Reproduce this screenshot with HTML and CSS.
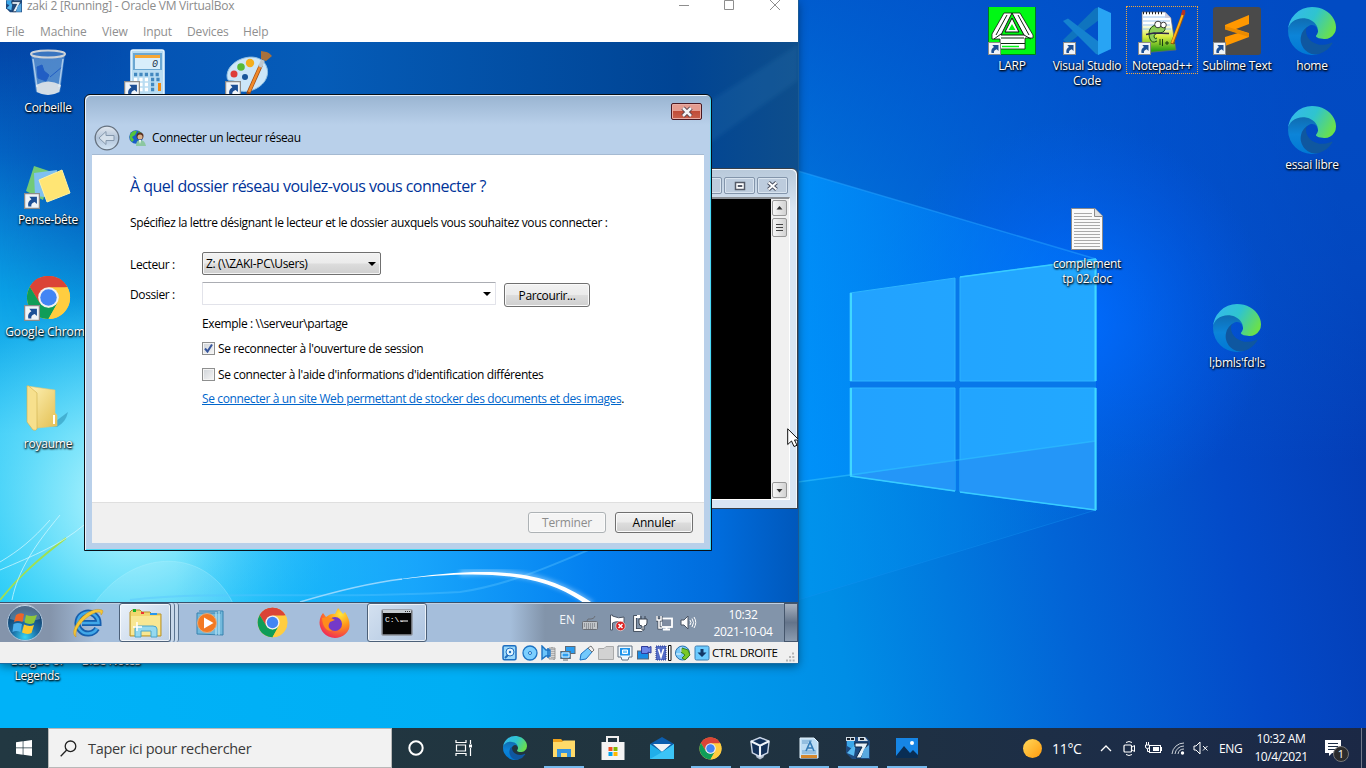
FILE: index.html
```html
<!DOCTYPE html>
<html lang="fr">
<head>
<meta charset="utf-8">
<title>Bureau</title>
<link rel="stylesheet" href="styles.css">
</head>
<body>
<svg class="defs" width="0" height="0">
  <defs>
    <linearGradient id="eg1" x1="0" y1="0.2" x2="1" y2="0.6"><stop offset="0" stop-color="#35b8ee"/><stop offset=".5" stop-color="#2fc4cf"/><stop offset="1" stop-color="#6be04a"/></linearGradient>
    <linearGradient id="eg2" x1="0" y1="0" x2="0" y2="1"><stop offset="0" stop-color="#1069ac"/><stop offset=".5" stop-color="#0c84d8"/><stop offset="1" stop-color="#0078d4"/></linearGradient>
    <linearGradient id="fold" x1="0" y1="0" x2="1" y2="1"><stop offset="0" stop-color="#fff3b8"/><stop offset="1" stop-color="#e3bf52"/></linearGradient>
    <radialGradient id="ff" cx=".7" cy=".2" r=".9"><stop offset="0" stop-color="#ffe83c"/><stop offset=".45" stop-color="#ff9518"/><stop offset="1" stop-color="#f0205c"/></radialGradient>
    <radialGradient id="orb" cx=".5" cy=".9" r=".8"><stop offset="0" stop-color="#35d4f4"/><stop offset=".45" stop-color="#1b6ea5"/><stop offset="1" stop-color="#123a63"/></radialGradient>
    <symbol id="edge" viewBox="0 0 256 256"><g transform="translate(-4.63 -4.92)">
      <path fill="#0f57a0" d="M235.68 195.46a93.73 93.73 0 01-10.54 4.71 101.87 101.87 0 01-35.9 6.46c-47.32 0-88.54-32.55-88.54-74.32A31.48 31.48 0 01117.13 105c-42.8 1.8-53.8 46.4-53.8 72.53 0 73.88 68.09 81.37 82.76 81.37 7.91 0 19.84-2.3 27-4.56l1.31-.44a128.34 128.34 0 0066.6-52.8 4 4 0 00-5.32-5.64z"/>
      <path fill="url(#eg2)" d="M110.34 246.34A79.2 79.2 0 0187.6 225a80.72 80.72 0 0129.53-120c3.12-1.47 8.45-4.13 15.54-4a32.35 32.35 0 0125.69 13 31.88 31.88 0 016.36 18.66c0-.21 24.46-79.6-80-79.6-43.9 0-80 41.66-80 78.21a130.15 130.15 0 0012.11 56 128 128 0 00156.38 67.11 75.55 75.55 0 01-62.78-8z"/>
      <path fill="url(#eg1)" d="M156.94 153.78c-.81 1.05-3.3 2.5-3.3 5.66 0 2.61 1.7 5.12 4.72 7.23 14.38 10 41.49 8.68 41.56 8.68a59.56 59.56 0 0030.27-8.35 61.38 61.38 0 0030.43-52.88c.26-22.41-8-37.31-11.34-43.91C228.09 28.76 182.35 4.92 132.61 4.92a128 128 0 00-128 126.2c.48-36.54 36.8-66.05 80-66.05 3.5 0 23.46.34 42 10.07 16.34 8.58 24.9 18.94 30.85 29.21 6.18 10.67 7.28 24.15 7.28 29.52s-2.74 13.33-7.8 19.91z"/></g>
    </symbol>
    <symbol id="chrome" viewBox="0 0 48 48">
      <circle cx="24" cy="24" r="23" fill="#ffcd40"/>
      <path fill="#db4437" d="M24 24 4.1 12.5A23 23 0 0 1 43.9 12.5z"/><path fill="#db4437" d="M24 13H44.2A23 23 0 0 0 4.1 12.5L14.5 30z"/>
      <path fill="#0f9d58" d="M4.1 12.5A23 23 0 0 0 24 47L33.5 30 24 35 14.5 29.5z"/>
      <path fill="#ffcd40" d="M24 13H44.2A23 23 0 0 1 24 47L33.6 29.5z"/>
      <circle cx="24" cy="24" r="11" fill="#f1f1f1"/><circle cx="24" cy="24" r="8.8" fill="#4285f4"/>
    </symbol>
    <symbol id="short" viewBox="0 0 13 13"><rect x=".5" y=".5" width="12" height="12" fill="#f0f4f8" stroke="#8a8a8a"/><path d="M3.500 11C2.800 8 4 6 6 5L4.300 3H10.500V9L8.700 7.300C6.500 8 5.600 9.300 6 11z" fill="#1c4f96"/></symbol>
    <symbol id="vmico" viewBox="0 0 24 24"><path d="M0 1H20L24 5V23H6L0 17z" fill="#1d4a80"/><path d="M1 5H8V14L1 10z" fill="#3aa6e8"/><path d="M1 17 10 7 8 20z" fill="#57b8f0"/><path d="M9 7H22L15 22H10L16 11H9z" fill="#e8f1f8" stroke="#0d2747"/><path d="M18 13 23 9V22H15z" fill="#5aa9e0"/><path d="M0 1H9V5H0zM12 1H19L22 5H12z" fill="#d4dde5"/><path d="M1 3H4M5 3H8M14 3H18" stroke="#17202c" stroke-width="2"/></symbol>
    <filter id="b3"><feGaussianBlur stdDeviation="2"/></filter>
  </defs>
</svg>

<main class="desktop">
  <svg class="wallpaper" viewBox="0 0 1366 768" preserveAspectRatio="none">
    <defs>
      <linearGradient id="base" x1="0" y1=".55" x2="1" y2=".45"><stop offset="0" stop-color="#00b2f8"/><stop offset=".3" stop-color="#00aef4"/><stop offset=".58" stop-color="#008ee6"/><stop offset=".75" stop-color="#0264d6"/><stop offset=".88" stop-color="#034ac8"/><stop offset="1" stop-color="#043cb4"/></linearGradient>
      <linearGradient id="topd" x1="0" y1="0" x2="0" y2="1"><stop offset="0" stop-color="#0050c8" stop-opacity=".75"/><stop offset=".28" stop-color="#0058d0" stop-opacity=".45"/><stop offset=".6" stop-color="#0068e0" stop-opacity="0"/></linearGradient>
      <radialGradient id="glow" gradientUnits="userSpaceOnUse" cx="1070" cy="320" r="200"><stop offset="0" stop-color="#006cff"/><stop offset=".35" stop-color="#006aff" stop-opacity=".6"/><stop offset="1" stop-color="#005ef0" stop-opacity="0"/></radialGradient>
      <linearGradient id="beam" gradientUnits="userSpaceOnUse" x1="798" y1="0" x2="1096" y2="0"><stop offset="0" stop-color="#0092fc" stop-opacity=".85"/><stop offset="1" stop-color="#0080ff" stop-opacity=".25"/></linearGradient>
      <linearGradient id="beam2" gradientUnits="userSpaceOnUse" x1="798" y1="0" x2="1096" y2="0"><stop offset="0" stop-color="#0094ee" stop-opacity=".8"/><stop offset="1" stop-color="#0078e4" stop-opacity=".2"/></linearGradient>
      <linearGradient id="pane" gradientUnits="userSpaceOnUse" x1="850" y1="0" x2="1096" y2="0"><stop offset="0" stop-color="#22a2ff"/><stop offset="1" stop-color="#22a8ff"/></linearGradient>
    </defs>
    <rect width="1366" height="768" fill="url(#base)"/>
    <rect width="1366" height="768" fill="url(#topd)"/>
    <rect x="798" width="568" height="728" fill="url(#glow)"/>
    <path d="M798 171 1096 259V441L798 482z" fill="url(#beam)"/>
    <path d="M798 482 1096 441V510L798 600z" fill="url(#beam2)"/>
    <path d="M798 171 1096 259" stroke="#25a4ff" stroke-opacity=".5" stroke-width="1.500"/>
    <path d="M798 600 1096 510" stroke="#1592f0" stroke-opacity=".4"/>
    <path d="M850 293 1096 259V510L850 476z" fill="#0878ea"/>
    <path d="M850 293 955 278V381H850zM960 277 1096 259V381H960zM850 388H955V491L850 476zM960 388H1096V510L960 492z" fill="url(#pane)" stroke="#2cb4ff"/>
    <path d="M850 476 955 460V491zM960 460 1096 441V510L960 492z" fill="#2496f8"/>
    <path d="M798 482 850 475 1096 441" stroke="#2ec0ff" stroke-opacity=".6" stroke-width="1.500" fill="none"/>
    <path d="M851 293V381M851 388V476M1095.500 259V381M1095.500 388V510" stroke="#40d8ff" stroke-width="2"/>
    <path d="M850 476 955 491M960 492 1096 510M960 277 1096 259" stroke="#38ccff" stroke-width="1.500"/>
  </svg>

  <div class="shortcut s-league"><span class="cap">League of<br>Legends</span></div>
  <div class="shortcut s-blue"><span class="cap">Blue Notes</span></div>

  <div class="shortcut s-larp">
    <svg width="48" height="48" viewBox="0 0 48 48"><rect width="48" height="48" fill="#00f814"/><path d="M.5 0V47.500H47.500V0" fill="none" stroke="#007a20"/><path d="M16 6H32L45 28V31H37V42H12V32H4V27z" fill="#fff" stroke="#111" stroke-width=".8"/><path d="M24 6 13 28H36z" fill="#00f814" stroke="#111"/><path d="M24 11 17 25H31z" fill="#fff" stroke="#111"/><path d="M24 17 20.500 23H27.500z" fill="#00f814"/><path d="M13 31H36M13 36.500H37M13 27 6 32M36 28l7 4M19 8 8 28M30 8 41 28" stroke="#0b2a0e" fill="none"/><path d="M14 39.500H31" stroke="#00f814" stroke-width="1.500"/><use href="#short" y="35" width="13" height="13"/></svg>
    <span class="cap">LARP</span></div>
  <div class="shortcut s-vsc">
    <svg width="48" height="48" viewBox="0 0 48 48"><path d="M36 0V13L5 36.500 0 33 32 1.500z" fill="#0f74be"/><path d="M0 14 5 11.500 36 35V48L33 47z" fill="#1582cf"/><path d="M35 0 48 6V42L35 48z" fill="#28a4f4"/><use href="#short" y="35" width="13" height="13"/></svg>
    <span class="cap">Visual Studio Code</span></div>
  <div class="shortcut s-npp">
    <svg width="48" height="48" viewBox="0 0 48 48"><defs><linearGradient id="np" x1="0" y1="0" x2="0" y2="1"><stop offset=".3" stop-color="#fff"/><stop offset=".6" stop-color="#d8ec40"/><stop offset=".95" stop-color="#289c14"/></linearGradient></defs><path d="M4 5H27L33 11 38 43 4 46z" fill="url(#np)" stroke="#667" stroke-width=".7"/><path d="M5 10H28M5 14H32M5 18H32M5 22H33" stroke="#9cc4ee"/><path d="M5 6H26" stroke="#222" stroke-width="2.500" stroke-dasharray="1 2"/><path d="M27 5V11H33z" fill="#ccd"/><path d="M19 34Q14 37 12 32C9 24 13 18 19 18L27 20Q28 25 22 26 16 26 16 30 17 33 19 31" fill="#8fce58" stroke="#174a13" stroke-width="1"/><circle cx="20" cy="17.500" r="3.300" fill="#fff" stroke="#111" stroke-width=".8"/><circle cx="25.500" cy="18" r="2.800" fill="#fff" stroke="#111" stroke-width=".8"/><path d="M8 27.500 16 26 31 26.500" stroke="#30264a" stroke-width="1.300" fill="none"/><path d="M22 32V38M24.500 32V39M27 36H31M33 36H37M29 34V38" stroke="#173b13" fill="none"/><path d="M34 37 46 5" stroke="#9c560d" stroke-width="3.500"/><path d="M34 36 45 7" stroke="#ffb51c" stroke-width="2"/><path d="m44.500 8 1.500-5" stroke="#b83024" stroke-width="3"/><use href="#short" y="35" width="13" height="13"/></svg>
    <span class="cap">Notepad++</span></div>
  <div class="shortcut s-sub">
    <svg width="48" height="48" viewBox="0 0 48 48"><rect width="48" height="48" rx="3" fill="#4a4a4a"/><path d="M12 18 36 8V17L23 22 36 26V30L12 39V30L25 26 12 22z" fill="#ff9800"/><path d="M12 19 36 26.500V30L12 22.500z" fill="#e98a00"/><use href="#short" y="35" width="13" height="13"/></svg>
    <span class="cap">Sublime Text</span></div>
  <div class="shortcut s-home"><svg width="48" height="48"><use href="#edge"/></svg><span class="cap">home</span></div>
  <div class="shortcut s-essai"><svg width="48" height="48"><use href="#edge"/></svg><span class="cap">essai libre</span></div>
  <div class="shortcut s-doc">
    <svg width="48" height="48" viewBox="0 0 48 48"><path d="M8.500 3.500H32L39.500 11V44.500H8.500z" fill="#fafafa" stroke="#8b8b8b"/><path d="M31.500 3.500V11.500H39.500" fill="#e2e2e2" stroke="#8b8b8b"/><path d="M11 8.500H29M11 11.500H29M11 14.500H37M11 17.500H37M11 20.500H37M11 23.500H37M11 26.500H37M11 29.500H37M11 32.500H37M11 35.500H37M11 38.500H37M11 41.500H37" stroke="#aaa"/></svg>
    <span class="cap">complement tp 02.doc</span></div>
  <div class="shortcut s-bmls"><svg width="48" height="48"><use href="#edge"/></svg><span class="cap">l;bmls'fd'ls</span></div>

  <section class="vm">
    <header class="vm-title">
      <svg width="16" height="16"><use href="#vmico"/></svg>
      <span class="vm-name">zaki 2 [Running] - Oracle VM VirtualBox</span>
      <svg class="vm-controls" width="110" height="14" viewBox="0 0 110 14"><path d="M4 5.500H14M49.500 .500H58.500V9.500H49.500zM95 0 105 10M105 0 95 10" fill="none" stroke="#8e8e8e"/></svg>
    </header>
    <nav class="vm-menu"><span class="m1">File</span><span class="m2">Machine</span><span class="m3">View</span><span class="m4">Input</span><span class="m5">Devices</span><span>Help</span></nav>

    <div class="guest">
      <svg class="guest-wall" viewBox="0 42 798 600" preserveAspectRatio="none">
        <defs>
          <linearGradient id="g7" gradientUnits="userSpaceOnUse" x1="0" y1="42" x2="0" y2="602"><stop offset="0" stop-color="#0346a8"/><stop offset=".2" stop-color="#0464c4"/><stop offset=".45" stop-color="#0aa0e6"/><stop offset=".7" stop-color="#34c8f6"/><stop offset="1" stop-color="#14c6f6"/></linearGradient>
          <linearGradient id="g7r" gradientUnits="userSpaceOnUse" x1="0" y1="0" x2="798" y2="0"><stop offset=".22" stop-color="#1ca4ff" stop-opacity="0"/><stop offset=".52" stop-color="#18a2fc" stop-opacity=".9"/><stop offset=".74" stop-color="#0480f0"/><stop offset=".9" stop-color="#006cdc"/><stop offset="1" stop-color="#0058bc"/></linearGradient>
          <linearGradient id="g7t" gradientUnits="userSpaceOnUse" x1="0" y1="0" x2="798" y2="0"><stop offset="0" stop-color="#0346a8" stop-opacity="0"/><stop offset=".2" stop-color="#0454b4"/><stop offset=".4" stop-color="#055cb8"/><stop offset=".85" stop-color="#004494"/><stop offset="1" stop-color="#0e4e8c"/></linearGradient>
          <linearGradient id="fade" x1="0" y1="0" x2="0" y2="1"><stop offset=".45" stop-color="#fff"/><stop offset="1" stop-color="#000"/></linearGradient>
          <mask id="mk"><rect y="42" width="798" height="300" fill="url(#fade)"/></mask>
          <radialGradient id="lt" gradientUnits="userSpaceOnUse" cx="130" cy="500" r="210"><stop offset="0" stop-color="#c8fbff"/><stop offset=".4" stop-color="#8ceafc" stop-opacity=".75"/><stop offset="1" stop-color="#50d8fc" stop-opacity="0"/></radialGradient>
        </defs>
        <rect y="42" width="798" height="600" fill="url(#g7)"/>
        <rect y="42" width="798" height="600" fill="url(#lt)"/>
        <rect y="42" width="798" height="600" fill="url(#g7r)"/>
        <rect y="42" width="798" height="300" fill="url(#g7t)" mask="url(#mk)"/>
        <path d="M680 120 798 45V80L700 150z" fill="#4a9aca" fill-opacity=".12" filter="url(#b3)"/>
        <path d="M90 610C130 545 210 545 236 610z" fill="#fff" fill-opacity=".12" stroke="#b8f4ff" stroke-opacity=".3"/>
        <path d="M0 600C20 575 40 558 66 538" stroke="#a0e050" stroke-width="2" fill="none"/>
        <path d="M0 570C35 555 60 545 84 525M0 562C20 550 32 540 50 520M12 600C18 570 35 545 60 515" stroke="#d8faff" stroke-opacity=".7" fill="none"/>
        <path d="M130 600C220 590 320 600 460 592 510 585 560 562 600 545" stroke="#58c4ff" stroke-opacity=".4" stroke-width="2" fill="none"/>
        <path d="M300 602C340 590 370 583 402 579" stroke="#b0e0ff" stroke-opacity=".8" stroke-width="1.500" fill="none"/>
        <path d="M460 573C520 569 556 580 592 604" stroke="#bfe4ff" stroke-width="6" stroke-opacity=".5" fill="none" filter="url(#b3)"/>
        <path d="M395 580C500 564 548 572 594 604H585C550 578 500 567 395 580z" fill="#fff"/>
      </svg>

      <div class="gicon g-bin"><svg width="48" height="48" viewBox="0 0 48 48"><path d="M7 4 12 43Q24 49 36 43L41 4z" fill="#bfe0f8" fill-opacity=".4"/><path d="M12 36 13 43Q24 49 35 43L37 36Q24 29 12 36z" fill="#e2e5e8" fill-opacity=".9"/><path d="M13 18 18 16 20 22 25 26 22 32 14 29zM26 28 38 18" fill="#215ec4" stroke="#215ec4"/><ellipse cx="24" cy="5" rx="17" ry="3.500" fill="#3a75c0" stroke="#cdd2d7" stroke-width="2"/><path d="M9 10 13 38M39 10 35 38" stroke="#e8f6ff" stroke-opacity=".6" stroke-width="1.500"/></svg><span class="gcap">Corbeille</span></div>
      <div class="gicon g-calc"><svg width="48" height="48" viewBox="0 0 48 48"><rect x="8" y="1" width="33" height="46" rx="2" fill="#b9dcf2" stroke="#e8f6ff" stroke-width="1.500"/><path d="M10 4H39V21H10z" fill="#6ba7d2"/><path d="M12 6H37V9H12z" fill="#f7a735"/><path d="M12 9H37V20H12z" fill="#d9eefb"/><path d="M11 25.500H38M28 30.500H38M28 35.500H33M28 40.500H33" stroke="#4288bf" stroke-width="3.500" stroke-dasharray="3.200 2.200"/><path d="M11 30.500H25M11 35.500H25M11 40.500H25" stroke="#fff" stroke-width="3.500" stroke-dasharray="3.200 2.200"/><path d="M35 34H38V42H35z" fill="#f28b12"/><text x="29" y="18" class="calc-digit">0</text><use href="#short" x="1" y="32" width="16" height="16"/></svg></div>
      <div class="gicon g-paint"><svg width="48" height="48" viewBox="0 0 48 48"><path d="M3 26C5 8 38 0 43 19 47 33 30 45 16 42 6 40 14 33 10 32 5 31 3 33 3 26z" fill="#cce6f8" stroke="#8dbee2"/><circle cx="10" cy="25" r="3.500" fill="#de3d39"/><circle cx="17" cy="18" r="3.800" fill="#57b936"/><circle cx="26" cy="14" r="4.200" fill="#f3ad1d"/><circle cx="21" cy="28" r="3" fill="#19569a"/><path d="M24 45 37 16" stroke="#9b4b14" stroke-width="4"/><path d="M25 43 36 18" stroke="#f18a2a" stroke-width="2.600"/><path d="m36 18 3-7" stroke="#bec8d0" stroke-width="4"/><path d="M37 2C41 3 44 2 48 7L42 12 37 10z" fill="#a9713b"/><use href="#short" x="1" y="32" width="16" height="16"/></svg></div>
      <div class="gicon g-note"><svg width="48" height="48" viewBox="0 0 48 48"><path d="M10 2 28 8 19 36 2 27z" fill="#72ca76"/><path d="M10 9 33 6 31 34 11 32z" fill="#7fc0f0"/><path d="M15 16 38 6 46 29 23 38z" fill="#ffe574" stroke="#fff2a2"/><use href="#short" y="29" width="16" height="16"/></svg><span class="gcap">Pense-bête</span></div>
      <div class="gicon g-chrome"><svg width="48" height="48" viewBox="0 0 48 48"><use href="#chrome" x="2" y="0" width="45" height="45"/><use href="#short" y="30" width="16" height="16"/></svg><span class="gcap">Google Chrom</span></div>
      <div class="gicon g-folder"><svg width="48" height="48" viewBox="0 0 48 48"><path d="M24 42 44 27Q42 37 33 42z" fill="#17759c" fill-opacity=".4"/><path d="M3 1 31 5V28L33 30V41L13 43z" fill="url(#fold)" stroke="#e2c873" stroke-width=".6"/><path d="M3 1Q4 0 6 2L13 8V44Q12 46 9 45L3 37z" fill="#f7e08d" stroke="#cfae4c" stroke-width=".6"/><path d="M30 30V39" stroke="#fff" stroke-width="2"/></svg><span class="gcap">royaume</span></div>

      <section class="console">
        <div class="con-buttons"><i></i><i><svg width="12" height="10"><path d="M1.500 1.500H10.500V8.500H1.500z" fill="#fff" stroke="#555b68" stroke-width="1.500"/><path d="M4 4.500H8V5.500H4z" fill="#fff" stroke="#555b68"/></svg></i><i><svg width="13" height="10"><path d="M2.500 1.500 10.500 8.500M10.500 1.500 2.500 8.500" stroke="#4a5060" stroke-width="4"/><path d="M2.500 1.500 10.500 8.500M10.500 1.500 2.500 8.500" stroke="#fff" stroke-width="2"/></svg></i></div>
        <div class="con-body"><div class="con-scroll">
          <b class="sb"><svg width="15" height="15"><path d="M4.500 8.500 7.500 5 10.500 8.500z" fill="#333"/></svg></b>
          <b class="sb thumb"><svg width="15" height="18"><path d="M4 5.500H11M4 8.500H11M4 11.500H11" stroke="#444"/></svg></b>
          <b class="sb down"><svg width="15" height="15"><path d="M4.500 6 7.500 9.500 10.500 6z" fill="#333"/></svg></b>
        </div></div>
      </section>

      <section class="dialog">
        <button class="dlg-close"><svg width="14" height="12"><path d="M3 2 11 10M11 2 3 10" stroke="#54404a" stroke-width="4.500"/><path d="M3 2 11 10M11 2 3 10" stroke="#f4f4f6" stroke-width="2.500"/></svg></button>
        <div class="dlg-nav">
          <svg width="26" height="26" viewBox="0 0 26 26"><defs><linearGradient id="bk" x1="0" y1="0" x2="0" y2="1"><stop offset="0" stop-color="#e2e8ef"/><stop offset=".5" stop-color="#b1c3d8"/><stop offset="1" stop-color="#d4e6f6"/></linearGradient></defs><circle cx="13" cy="13" r="11.800" fill="url(#bk)" stroke="#65717f" stroke-width="1.300"/><path d="M5 13 12 6.500V10.500H20V15.500H12V19.500z" fill="#d5e0eb" stroke="#8598ad"/></svg>
          <svg class="net" width="17" height="17" viewBox="0 0 17 17"><circle cx="7" cy="7" r="6.800" fill="#1a5dc8"/><path d="M2 3Q5 0 8 1L6 5 3 7 5 10 3 12Q-1 8 2 3z" fill="#56c33c"/><path d="M9 1Q13 2 14 6L10 6z" fill="#4fae3c"/><circle cx="11" cy="6" r="3.500" fill="#583021"/><circle cx="11" cy="7" r="2.500" fill="#d9b28e"/><path d="M7 16Q7 10 11 10 16 10 17 16z" fill="#8cc7a1"/><path d="m10 10 1 4 1-4z" fill="#fff"/></svg>
          <span class="dlg-name">Connecter un lecteur réseau</span>
        </div>
        <div class="dlg-content">
          <div class="dlg-form">
            <h1>À quel dossier réseau voulez-vous vous connecter ?</h1>
            <p class="lead">Spécifiez la lettre désignant le lecteur et le dossier auxquels vous souhaitez vous connecter :</p>
            <div class="row r1"><label>Lecteur :</label><div class="select"><span>Z: (\\ZAKI-PC\Users)</span><i class="caret"></i></div></div>
            <div class="row r2"><label>Dossier :</label><div class="combo"><i class="caret"></i></div><button class="btn browse">Parcourir...</button></div>
            <p class="ind ex">Exemple : \\serveur\partage</p>
            <p class="ind chk c1"><i class="box"><svg width="11" height="11"><path d="M2 5.500 4.500 8.500 9 1.500" stroke="#36559c" stroke-width="2" fill="none"/></svg></i><span>Se reconnecter à l'ouverture de session</span></p>
            <p class="ind chk c2"><i class="box"></i><span>Se connecter à l'aide d'informations d'identification différentes</span></p>
            <p class="ind lnk"><a>Se connecter à un site Web permettant de stocker des documents et des images</a>.</p>
          </div>
          <footer class="dlg-foot"><button class="btn off">Terminer</button><button class="btn">Annuler</button></footer>
        </div>
      </section>

      <svg class="cursor" width="12" height="20" viewBox="0 0 12 20"><path d="M.7.800V16.500L4.500 13 7 18.500 10 17.300 7.500 12H12z" fill="#fff" stroke="#111"/></svg>

      <div class="gbar">
        <svg class="orb" width="38" height="38" viewBox="0 0 38 38"><circle cx="19" cy="19" r="17.500" fill="url(#orb)" stroke="#adc5dc"/><path d="M4 15A15 15 0 0 1 34 15Q19 20 4 15z" fill="#fff" fill-opacity=".25"/><path d="M10 11Q14 8 18 10L16.500 18Q12 16 8 18z" fill="#ee6428"/><path d="M20 11Q25 13 31 11L28 19Q23 21 18.500 18.500z" fill="#8fc63a"/><path d="M7.500 20Q12 18 16 20L14.500 28Q10 26 6.500 28z" fill="#4bb0ec"/><path d="M18 20.500Q23 23 28 21L25.500 29Q21 31 16 28.500z" fill="#fcc72c"/></svg>
        <div class="gcell ie"><svg width="34" height="34" viewBox="0 0 34 34"><path d="M26 22.500A10.500 10.500 0 1 1 27.500 17H11" fill="none" stroke="#155fae" stroke-width="6"/><path d="M26 22.500A10.500 10.500 0 1 1 27.500 17H11" fill="none" stroke="#41a8e8" stroke-width="2.500"/><path d="M5 31C-4 26 15 -1 31 4 33 5 31 8 30 9 31 -1 2 17 5 31z" fill="#f5c736" stroke="#c89018" stroke-width=".5"/></svg></div>
        <div class="gcell on exp"><svg width="34" height="32" viewBox="0 0 34 32"><path d="M2 5 4 3H12L14 5H22L24 7H33V29H2z" fill="#f1d66f" stroke="#b8932c"/><path d="M5 3.500H8" stroke="#19b428" stroke-width="3"/><path d="M13 6H16" stroke="#e33" stroke-width="2"/><path d="M22 7H29" stroke="#2696ee" stroke-width="2"/><path d="M3 9H32V28H3z" fill="#f8e793"/><path d="M7 30V22Q7 19 10 19H25Q29 19 29 22V30H23V24H13V30z" fill="#95d9ef" stroke="#4aa5ca"/><path d="M9 15V24M5 20H14" stroke="#fff" stroke-width="1.500"/></svg></div>
        <div class="stack"><i></i><i></i></div>
        <div class="gcell wmp"><svg width="30" height="28" viewBox="0 0 30 28"><path d="M3 2H27V26L1 25V4H25" fill="#73b9dc" stroke="#3682ae"/><path d="M23 2V26M20 3V26" stroke="#c2e9f8"/><circle cx="11" cy="14" r="9.500" fill="#f37922" stroke="#e0ac80"/><path d="M8 8.500 17.500 14 8 19.500z" fill="#fff"/></svg></div>
        <div class="gcell chr"><svg width="31" height="31"><use href="#chrome"/></svg></div>
        <div class="gcell fox"><svg width="32" height="32" viewBox="0 0 32 32"><path d="M3 9 5 6 8 10Q13 6 17 7L20 1 25 7 27 5Q33 14 31 22A15.200 15.200 0 1 1 3 9z" fill="url(#ff)"/><circle cx="17" cy="17" r="7" fill="#7439c8"/><path d="M4 11Q12 9 17 13L12 15Q8 21 14 24 5 24 4 11z" fill="#ff8c1c"/></svg></div>
        <div class="gcell on cmd"><svg width="32" height="27" viewBox="0 0 32 27"><rect x="1" y="1" width="30" height="25" rx="1" fill="#050505" stroke="#8d929a" stroke-width="1.500"/><path d="M2 2.500H30" stroke="#c6ccd2" stroke-width="3"/><path d="M24 2.500H29" stroke="#333" stroke-dasharray="1 1"/><text x="4" y="13" class="cmd-text">C:\.</text><path d="M19 12H27" stroke="#fff"/></svg></div>
        <div class="gtray">
          <span class="en">EN</span>
          <svg class="kb" width="16" height="14" viewBox="0 0 16 14"><rect x=".5" y="5.500" width="15" height="8" rx="1" fill="#c1c5c9" stroke="#6b6f76"/><path d="M2 8H14M2 10H14M4 12H12" stroke="#60656c" stroke-dasharray="1 1"/><path d="M5 5Q5 2 9 3 12 3 13 0" fill="none" stroke="#6b6f76"/></svg>
          <svg class="t1" width="17" height="18" viewBox="0 0 17 18"><path d="M1.500 1V16H3.500V9Q9 6 15 10V3Q10 5 3.500 2V1z" fill="#fff" stroke="#4e5868"/><circle cx="11.500" cy="12" r="4.700" fill="#db2020" stroke="#eee" stroke-width=".6"/><path d="m9.500 10 4 4m0-4-4 4" stroke="#fff" stroke-width="1.500"/></svg>
          <svg class="t2" width="16" height="18" viewBox="0 0 16 18"><path d="M4 3H2V16H9" fill="none" stroke="#384250" stroke-width="3.500"/><path d="M7 3H2V16H9V14" fill="none" stroke="#fff" stroke-width="1.800"/><path d="M4 1H7V3H4z" fill="#fff"/><path d="M6 5H14V9Q14 12 11 12V16H9V12Q6 12 6 9zM8 2V5M12 2V5" fill="#fff" stroke="#384250"/></svg>
          <svg class="t3" width="17" height="18" viewBox="0 0 17 18"><rect x="5" y="4.500" width="11" height="8.500" fill="#7f8ca0" stroke="#fff" stroke-width="1.800"/><path d="M7 15.500H14M10.500 13V16" stroke="#fff" stroke-width="2"/><path d="M1 2V6H5V2M3 6V14H6" fill="none" stroke="#404a58" stroke-width="3"/><path d="M1 2V6H5V2M3 6V14H6" fill="none" stroke="#fff" stroke-width="1.500"/></svg>
          <svg class="t4" width="17" height="18" viewBox="0 0 17 18"><path d="M1 6H4L8 2V15L4 11H1z" fill="#fff" stroke="#4a5564"/><path d="M10 6Q12 8.500 10 11M12 4.500Q15 8.500 12 13M14 3Q17.500 8.500 14 14" fill="none" stroke="#fff"/></svg>
          <div class="gclock"><span>10:32</span><span>2021-10-04</span></div>
          <i class="showdesk"></i>
        </div>
      </div>
    </div>

    <footer class="vm-status">
      <svg width="16" height="16" viewBox="0 0 16 16"><rect x="1" y=".8" width="13" height="14" rx="1.500" fill="#9bd8fb" stroke="#1e6ec0" stroke-width="1.500"/><circle cx="8" cy="7" r="4" fill="#e2f5ff" stroke="#1e6ec0"/><circle cx="8" cy="7" r="1.200" fill="#1e6ec0"/><path d="m3 13 3-3" stroke="#1e6ec0" stroke-width="2"/></svg>
      <svg width="16" height="16" viewBox="0 0 16 16"><circle cx="8" cy="8" r="7" fill="#7ccfff" stroke="#1c72c2" stroke-width="1.300"/><circle cx="8" cy="8" r="1.500" fill="#dff4ff" stroke="#1c72c2"/></svg>
      <svg width="16" height="16" viewBox="0 0 16 16"><path d="M8 3H14V14H8z" fill="#d6d6d6" stroke="#999"/><path d="M1 1 5 5H9V11H5L1 14z" fill="#6cc5fb" stroke="#1c72c2" stroke-width="1.400"/><path d="M7 3V13" stroke="#1c72c2" stroke-width="1.500"/><path d="M11 2V14M13 4V15" stroke="#888" stroke-dasharray="1 1"/></svg>
      <svg width="16" height="16" viewBox="0 0 16 16"><rect x="5.500" y="1.500" width="9.500" height="7" fill="#2a9df0" stroke="#5f6a75"/><rect x=".8" y="6.500" width="9.500" height="7" fill="#2a9df0" stroke="#5f6a75"/><path d="M2 8H9V12H2z" fill="none" stroke="#e4f5ff"/><path d="M3 15H8" stroke="#5f6a75"/></svg>
      <svg width="16" height="16" viewBox="0 0 16 16"><path d="M1 15 2 9 9 3 13 7 7 14z" fill="#73c9fc" stroke="#1c72c2"/><path d="m9 3 3-2 3 4-2 2z" fill="#f1f1f1" stroke="#777"/></svg>
      <svg width="16" height="16" viewBox="0 0 16 16"><path d="M.5 3.500H6L8 1.500H15.500V14.500H.5z" fill="#d2d2d2" stroke="#aaa"/></svg>
      <svg width="16" height="16" viewBox="0 0 16 16"><path d="M1 1H15V12H12L11 15H5L4 12H1z" fill="#eef8ff" stroke="#647382"/><rect x="3" y="3" width="10" height="7.500" fill="#1f93ea"/><path d="M5.500 5H10.500V8.500H5.500z" fill="#7fcdfc" stroke="#fff"/></svg>
      <svg width="16" height="16" viewBox="0 0 16 16"><rect x="1.500" y="6" width="11" height="8" fill="#198ce5" stroke="#596676"/><path d="M5.500 1.500H12V3L15 1.500V8L12 7V8.500H5.500z" fill="#6d86e8" stroke="#303c9c"/></svg>
      <svg width="17" height="16" viewBox="0 0 17 16"><rect x="1" y="1" width="10" height="14" fill="#536bc6" stroke="#263a91" stroke-dasharray="1 1"/><path d="m3.500 4 2.500 8 2.500-8" fill="none" stroke="#fff" stroke-width="1.600"/><path d="M13.500 .5H16V15.500H13.500z" fill="#fff" stroke="#111"/></svg>
      <svg width="16" height="16" viewBox="0 0 16 16"><circle cx="7.500" cy="8" r="7" fill="#79c9fa" stroke="#276fac"/><path d="m7 3 6 2 2 5-5 5-3-2 3-3-4-3z" fill="#79c829" stroke="#367f1f"/><path d="M1 9H6M6 2V7" stroke="#e5f7ff"/></svg>
      <svg width="16" height="16" viewBox="0 0 16 16"><rect x="1" y="1" width="14" height="14" rx="1.500" fill="#6ccbff" stroke="#3c7cb0"/><path d="M6.500 4H9.500V7.500H12.500L8 12 3.500 7.500H6.500z" fill="#123767"/></svg>
      <span class="hostkey">CTRL DROITE</span>
      <svg class="grip" width="10" height="10"><path d="M6 1.500H9M3 5H9M0 8.500H9" stroke="#b5b5b5" stroke-width="2" stroke-dasharray="2 1.300"/></svg>
    </footer>
  </section>

  <div class="taskbar">
    <div class="start"><svg width="16" height="16" viewBox="0 0 16 16"><path d="M0 2.300 6.700 1.300V7.600H0zM7.400 1.200 16 0V7.600H7.400zM0 8.300H6.700V14.700L0 13.700zM7.400 8.300H16V16L7.400 14.800z" fill="#fff"/></svg></div>
    <div class="search"><svg width="17" height="17" viewBox="0 0 17 17"><circle cx="10.500" cy="6.300" r="5.300" fill="none" stroke="#222" stroke-width="1.300"/><path d="m6.700 10-6 6.300" stroke="#222" stroke-width="1.300"/></svg><span>Taper ici pour rechercher</span></div>
    <div class="tb c48"><svg width="18" height="18"><circle cx="9" cy="9" r="6.700" fill="none" stroke="#fff" stroke-width="2"/></svg></div>
    <div class="tb c50"><svg width="18" height="18" viewBox="0 0 18 18"><path d="M1 1V3.500H11V1M1.500 6H10.500V12H1.500zM1 17V14.500H11V17M15.500 1V5M15.500 9V17" fill="none" stroke="#fff" stroke-width="1.200"/><path d="M14 5.500H17V8.500H14z" fill="#fff"/></svg></div>
    <div class="tb"><svg width="24" height="24"><use href="#edge"/></svg></div>
    <div class="tb run"><svg width="24" height="24" viewBox="0 0 24 24"><path d="M1 3H9L11 5H23V20H1z" fill="#efa21c"/><path d="M1 6H10L11.500 4.500H23V21H1z" fill="#ffda69"/><path d="M5 21V13H19V21H15V17H9V21z" fill="#3493df"/></svg></div>
    <div class="tb"><svg width="24" height="24" viewBox="0 0 24 24"><path d="M6 7V1H17V7" fill="none" stroke="#eee" stroke-width="2"/><path d="M.5 6H23.500V24H.5z" fill="#f4f4f4"/><path d="M7.500 11H11.500V15H7.500z" fill="#f25022"/><path d="M12.500 11H16.500V15H12.500z" fill="#7fba00"/><path d="M7.500 16H11.500V20H7.500z" fill="#00a4ef"/><path d="M12.500 16H16.500V20H12.500z" fill="#ffb900"/></svg></div>
    <div class="tb"><svg width="24" height="24" viewBox="0 0 24 24"><path d="M0 8 12 1 24 8 12 16z" fill="#0c5eae"/><path d="M3 8H21L12 16z" fill="#f0f4f7"/><path d="M0 8 12 16 24 8V23H0z" fill="#20aeea"/><path d="M0 23 14 15 24 8V23z" fill="#3cc4f6"/></svg></div>
    <div class="tb run"><svg width="23" height="23"><use href="#chrome"/></svg></div>
    <div class="tb run"><svg width="22" height="24" viewBox="0 0 23 24"><path d="M6 17 8 22 11.500 24 15 22 17 17z" fill="#b4c0d0"/><path d="M2 5 11.500 1 21 5 19.500 17 11.500 21 3.500 17z" fill="#123058" stroke="#cbd6e7" stroke-width="1.500"/><path d="M2 5 11.500 9.500 21 5M11.500 9V21" fill="none" stroke="#f0f5fb" stroke-width="2.200"/></svg></div>
    <div class="tb run"><svg width="22" height="22" viewBox="0 0 22 22"><path d="M2 1H16L20 5V21H2z" fill="#bcdcf3" stroke="#e5f4ff"/><path d="M4 4H14M4 6H10M4 14H18M4 16H18" stroke="#6aa0cc"/><path d="M8 14 12 5 16 14M9.500 11H15" stroke="#347bb6" stroke-width="1.600" fill="none"/><path d="M3 18H19V21H3z" fill="#d5872d"/></svg></div>
    <div class="tb run"><svg width="24" height="24"><use href="#vmico"/></svg></div>
    <div class="tb run"><svg width="22" height="22" viewBox="0 0 22 22"><path d="M0 1H22V21H0z" fill="#1685e5"/><path d="M0 19 8 9 14 16 17 13 22 18V21H0z" fill="#092d54"/><circle cx="16" cy="6" r="2" fill="#fff"/></svg></div>
    <div class="tray">
      <i class="sun"></i><span class="temp">11°C</span>
      <svg class="w-up" width="12" height="8"><path d="m1 7 5-5 5 5" fill="none" stroke="#fff" stroke-width="1.300"/></svg>
      <svg class="w-meet" width="13" height="17" viewBox="0 0 13 17"><rect x="1" y="5" width="7.500" height="7" rx="1" fill="none" stroke="#fff" stroke-width="1.200"/><path d="m9 7 2.500-1.500V11.500L9 10M3 2.500Q6 .5 9 2.500M3 14.500Q6 16.500 9 14.500" fill="none" stroke="#fff"/></svg>
      <svg class="w-bat" width="17" height="13" viewBox="0 0 17 13"><rect x="4.500" y="3.500" width="11" height="7" fill="none" stroke="#fff"/><path d="M8 5H14V9H8zM16 5H17V9H16z" fill="#fff"/><path d="M.5 3H4.500V5Q4.500 6.500 2.500 6.500 .5 6.500 .5 5zM1.500 0V3M3.500 0V3M2.500 7V9.500H5" stroke="#fff" fill="none"/></svg>
      <svg class="w-wifi" width="14" height="14" viewBox="0 0 14 14"><path d="M1 13A12 12 0 0 1 13 2M4 13A9 9 0 0 1 13 5M7 13A6 6 0 0 1 13 8" fill="none" stroke="#ccd2d8"/><circle cx="11.500" cy="12" r="1.700" fill="#fff"/></svg>
      <svg class="w-vol" width="16" height="14" viewBox="0 0 16 14"><path d="M1 5H3L7 1V13L3 9H1z" fill="none" stroke="#fff"/><path d="m10 5 4.500 4.500m0-4.500L10 9.500" stroke="#fff"/></svg>
      <span class="eng">ENG</span>
      <div class="clock"><span>10:32 AM</span><span>10/4/2021</span></div>
      <div class="notif"><svg width="17" height="17" viewBox="0 0 17 17"><path d="M0 0H16V13H7L4 16V13H0z" fill="#fff"/><path d="M3 3.500H13M3 6.500H13M3 9.500H13" stroke="#1c2d44"/></svg><b>1</b></div>
      <i class="peek"></i>
    </div>
  </div>
</main>
</body>
</html>
```
FILE: styles.css
```css
* { box-sizing: border-box; }
body { margin: 0; font: 12px/15px "Open Sans", "Noto Sans", sans-serif; color: #000; }
h1, p { margin: 0; font-weight: 400; }
button { font: inherit; letter-spacing: inherit; padding: 0; }
svg { display: block; flex: none; }
i { font-style: normal; }
.defs { position: absolute; }
.desktop { position: relative; width: 1366px; height: 768px; overflow: hidden; display: flex; flex-direction: column; justify-content: flex-end; }
.wallpaper { position: absolute; inset: 0; width: 1366px; height: 768px; }

/* host desktop icons */
.shortcut { position: absolute; width: 74px; display: flex; flex-direction: column; align-items: center; gap: 3px; }
.cap { color: #fff; text-align: center; font-size: 12px; line-height: 15px; letter-spacing: -.25px; text-shadow: 0 1px 2px #000, 1px 1px 2px #000; }
.s-larp { left: 975px; top: 7px; }
.s-vsc { left: 1050px; top: 7px; }
.s-npp { left: 1126px; top: 6px; width: 72px; height: 68px; padding-top: 1px; outline: 1px dotted #f0a63c; outline-offset: -1px; }
.s-sub { left: 1200px; top: 7px; }
.s-home { left: 1275px; top: 7px; }
.s-essai { left: 1275px; top: 106px; }
.s-doc { left: 1050px; top: 205px; }
.s-bmls { left: 1200px; top: 304px; }
.s-league { left: 0; top: 653px; }
.s-blue { left: 74px; top: 653px; }

/* VirtualBox window */
.vm { position: absolute; left: 0; top: 0; width: 798px; height: 663px; display: flex; flex-direction: column; background: #fff; box-shadow: 0 1px 0 #1a6ea4, 1px 0 0 #1a5a94, 0 3px 9px rgba(0,0,0,.45); }
.vm-title { height: 22px; display: flex; align-items: flex-start; padding-left: 6px; color: #8c8c8c; }
.vm-title > svg:first-child { margin-top: -3px; }
.vm-name { margin: -2px 0 0 5px; line-height: 16px; letter-spacing: -.26px; }
.vm-controls { margin-left: auto; margin-right: 13px; }
.vm-menu { height: 20px; display: flex; padding: 2px 0 0 6px; color: #8f8f8f; line-height: 16px; letter-spacing: -.15px; }
.m1 { width: 34px; } .m2 { width: 62px; } .m3 { width: 41px; } .m4 { width: 44px; } .m5 { width: 56px; }
.guest { position: relative; height: 600px; overflow: hidden; display: flex; flex-direction: column; justify-content: flex-end; }
.guest-wall { position: absolute; left: 0; top: 0; width: 798px; height: 600px; }
.gicon { position: absolute; width: 100px; display: flex; flex-direction: column; align-items: center; gap: 3px; }
.gcap { color: #fff; white-space: nowrap; line-height: 15px; letter-spacing: -.25px; text-shadow: 0 1px 2px #000, 1px 1px 2px #000; }
.calc-digit { font: italic 10px "Liberation Mono", monospace; fill: #24384c; }
.g-bin { left: -2px; top: 7px; }
.g-calc { left: 97px; top: 7px; }
.g-paint { left: 198px; top: 7px; }
.g-note { left: -2px; top: 122px; }
.g-note svg { margin-bottom: -3px; }
.g-chrome { left: -2px; top: 233px; }
.g-chrome svg { margin-bottom: -2px; }
.g-chrome .gcap { margin-left: -6px; letter-spacing: -.1px; }
.g-folder { left: -2px; top: 343px; }

.console { position: absolute; left: 640px; top: 126px; width: 158px; height: 341px; border: 1px solid #38404a; border-radius: 0 6px 0 0; background: linear-gradient(#b8c9da, #d8e5f3 40px); box-shadow: inset -1px 1px #f3f8fc; padding: 8px 7px 8px 0; }
.con-buttons { display: flex; justify-content: flex-end; gap: 2px; height: 20px; padding-right: 2px; }
.con-buttons i { width: 31px; height: 17px; border: 1px solid #8395ab; border-radius: 2px; box-shadow: inset 0 0 0 1px #d9e4ef; background: #bdccdd; display: flex; align-items: center; justify-content: center; }
.con-body { height: 303px; border: 1px solid #8b8f94; border-width: 2px 1px 1px 0; border-right-color: #fff; border-bottom-color: #fff; background: #000; display: flex; justify-content: flex-end; }
.con-scroll { width: 18px; padding: 1px; background: #f0f0f0; display: flex; flex-direction: column; gap: 2px; }
.sb { width: 15px; height: 16px; border: 1px solid #989898; border-radius: 2px; background: linear-gradient(90deg, #f7f7f7, #d2d2d2); display: flex; justify-content: center; align-items: center; }
.thumb { height: 19px; }
.down { margin-top: auto; }

/* Windows 7 dialog */
.dialog { position: absolute; left: 84px; top: 52px; width: 628px; height: 457px; border: 1px solid #081018; border-radius: 6px 6px 0 0; padding: 0 7px 7px; background: linear-gradient(#99b4d1, #b9d0ea 30px, #b9d0ea); box-shadow: inset 1px 1px #edf4fb, inset -1px -1px #48d8f4; letter-spacing: -.38px; }
.dlg-close { position: absolute; right: 9px; top: 8px; width: 31px; height: 17px; border: 1px solid #4a1820; border-radius: 2px; background: linear-gradient(#e49c90 45%, #c04c38 50%, #c9604c); box-shadow: inset 0 0 0 1px #e8aca4; display: flex; align-items: center; justify-content: center; }
.dlg-nav { height: 59px; display: flex; align-items: center; padding: 27px 0 0 2px; }
.dlg-name { margin-top: -1px; }
.net { margin: 0 6px 0 9px; }
.dlg-content { height: 389px; background: #fff; border-top: 1px solid #a5bad2; display: flex; flex-direction: column; }
.dlg-form { flex: 1; padding: 20px 0 0 38px; }
.dlg-form h1 { font-size: 16px; line-height: 22px; color: #003399; white-space: nowrap; letter-spacing: -.52px; }
.lead { margin-top: 18px; white-space: nowrap; }
.row { display: flex; }
.row label { width: 72px; line-height: 25px; }
.r1 { margin-top: 22px; }
.r2 { margin-top: 5px; }
.select { width: 179px; height: 23px; border: 1px solid #707070; border-radius: 2px; background: linear-gradient(#f2f2f2, #ebebeb 48%, #dcdcdc 52%, #cfcfcf); display: flex; align-items: center; justify-content: space-between; padding: 0 4px 0 3px; box-shadow: inset 0 0 0 1px #f5f5f5; }
.caret { border: 4px solid transparent; border-top-color: #000; border-bottom: 0; }
.combo { width: 294px; height: 23px; border: 1px solid #e2e3ea; border-top-color: #abadb3; border-radius: 1px; display: flex; align-items: center; justify-content: flex-end; padding-right: 4px; }
.btn { width: 78px; height: 21px; border: 1px solid #707070; border-radius: 3px; background: linear-gradient(#f2f2f2, #ebebeb 48%, #dddddd 52%, #cfcfcf); box-shadow: inset 0 0 0 1px #fafafa; line-height: 17px; color: #000; }
.browse { width: 86px; height: 24px; margin: 1px 0 0 8px; }
.dlg-foot .btn { letter-spacing: -.2px; }
.dlg-foot .off { color: #8c8c8c; border-color: #adb2b5; background: #f4f4f4; }
.ind { margin-left: 72px; white-space: nowrap; }
.ex { margin-top: 9px; }
.chk { display: flex; align-items: center; gap: 3px; }
.c1 { margin-top: 10px; }
.c2 { margin-top: 11px; }
.box { width: 13px; height: 13px; border: 1px solid #8e8f8f; background: linear-gradient(135deg, #cfd3d8, #f6f6f6); box-shadow: inset 0 0 0 1px #f4f4f4; }
.lnk { margin-top: 9px; }
.lnk a { color: #0066cc; text-decoration: underline; }
.dlg-foot { height: 41px; background: #f0f0f0; border-top: 1px solid #dfdfdf; display: flex; justify-content: flex-end; gap: 9px; padding: 9px 11px 0 0; }
.cursor { position: absolute; left: 787px; top: 386px; }

/* Windows 7 taskbar */
.gbar { position: relative; height: 40px; display: flex; border-top: 1px solid #39526d; background: linear-gradient(90deg, #8494ab 0, #8494ab 50px, #a5bedb 95px, #a5bedb 510px, #8294aa 545px); box-shadow: inset 0 1px #c0d0e2; }
.orb { margin: 1px 0 0 6px; }
.gcell { display: flex; align-items: center; justify-content: center; }
.ie { width: 75px; padding-left: 12px; }
.exp { width: 52px; }
.on { border: 1px solid #4c6078; border-radius: 3px; background: linear-gradient(135deg, #eaf1f9, #bdd0e6); box-shadow: inset 0 0 0 1px rgba(255,255,255,.7); }
.cmd.on { background: linear-gradient(135deg, #d4e1f0, #adc4e0); }
.stack { display: flex; width: 8px; }
.stack i { width: 4px; border-right: 1px solid #5c7592; border-radius: 0 3px 3px 0; background: #c8d8ea; }
.wmp { width: 62px; padding-left: 2px; }
.chr { width: 62px; }
.fox { width: 62px; margin-right: 2px; }
.cmd { width: 60px; }
.cmd-text { font: 8px "Liberation Mono", monospace; fill: #fff; }
.gtray { margin-left: auto; display: flex; align-items: center; color: #fff; }
.gtray svg { margin-left: 7px; }
.en { margin-top: -6px; color: #f2f6fa; }
.gtray .t1 { margin-left: 11px; }
.gclock { width: 80px; margin-left: 6px; display: flex; flex-direction: column; text-align: center; line-height: 17px; letter-spacing: -.35px; }
.showdesk { width: 14px; height: 39px; margin-left: 1px; border: 1px solid #45566c; background: linear-gradient(#a8b2c0, #64748a 50%, #8c9cb0); }

.vm-status { height: 21px; display: flex; align-items: center; background: #f0f0f0; gap: 3px; padding-left: 502px; }
.vm-status > svg:first-child { margin-right: 1px; }
.hostkey { margin-left: -1px; white-space: nowrap; font-size: 11.5px; letter-spacing: -.4px; }
.vm-status .grip { margin-left: auto; margin-right: 2px; margin-top: 8px; }

/* host taskbar */
.taskbar { position: relative; height: 40px; display: flex; background: linear-gradient(90deg, #223842, #20343f 50%, #1c2c48 85%, #1b2845); color: #fff; }
.start { width: 48px; display: flex; align-items: center; justify-content: center; }
.search { width: 344px; background: #f2f2f2; border: 1px solid #b8b8b8; display: flex; align-items: center; gap: 11px; padding-left: 11px; color: #3a3a3a; font-size: 14.5px; letter-spacing: -.3px; }
.tb { width: 49px; display: flex; align-items: center; justify-content: center; }
.c48 { width: 48px; } .c50 { width: 50px; padding-right: 2px; }
.run { background: linear-gradient(#76b9ed, #76b9ed) center bottom / 40px 2px no-repeat; }
.tray { margin-left: auto; display: flex; align-items: center; }
.sun { width: 19px; height: 19px; border-radius: 50%; background: linear-gradient(135deg, #ffd95c, #ff9a0c); }
.temp { width: 41px; margin-left: 10px; font-size: 14px; letter-spacing: -.3px; }
.w-up { margin: 0 5px 0 7px; }
.w-meet { margin: 0 5px 0 6px; }
.w-bat { margin: 0 5px 0 4px; }
.w-wifi { margin: 0 5px 0 4px; }
.w-vol { margin: 0 5px 0 3px; }
.eng { width: 27px; margin: 0 4px 0 5px; letter-spacing: -.3px; }
.clock { width: 62px; display: flex; flex-direction: column; text-align: center; line-height: 18px; letter-spacing: -.4px; }
.notif { position: relative; width: 18px; margin: 0 18px 0 13px; }
.notif b { position: absolute; left: 8px; top: 6px; width: 16px; height: 16px; border-radius: 50%; border: 1px solid #777; background: #2c2c2c; font: 11px/14px "Open Sans", sans-serif; text-align: center; }
.peek { width: 1px; height: 40px; background: #73798a; margin-right: 4px; }
```
